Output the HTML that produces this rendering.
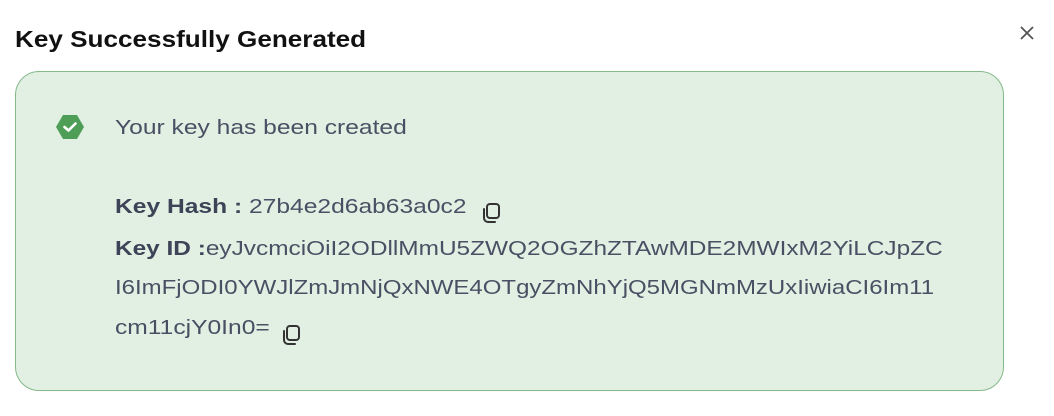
<!DOCTYPE html>
<html><head><style>
body{margin:0;width:1054px;height:416px;background:#fff;font-family:"Liberation Sans",sans-serif;position:relative;overflow:hidden}
.t{position:absolute;left:15px;top:26px;font-size:23px;font-weight:bold;color:#111;transform:scaleX(1.135);transform-origin:left top}
.x{position:absolute;left:1018px;top:24px}
.box{position:absolute;left:15px;top:71px;width:987px;height:318px;border:1px solid #86b98a;border-radius:24px;background:#e1f0e3}
.l{position:absolute;left:115px;font-size:20.5px;color:#4a5064;white-space:nowrap;transform:scaleX(1.2);transform-origin:left top}
b{color:#3e4458}
.ic{position:absolute}
</style></head><body>
<div class="t">Key Successfully Generated</div>
<svg class="x" width="18" height="18" viewBox="0 0 18 18"><path d="M3 3L15 15M15 3L3 15" stroke="#555" stroke-width="1.8"/></svg>
<div class="box"></div>
<svg class="ic" style="left:56px;top:114px" width="28" height="26" viewBox="0 0 28 26"><polygon points="7,1 21,1 28,13 21,25 7,25 0,13" fill="#4e9e57"/><path d="M8.5 13l4 3.5 7-7" stroke="#fff" stroke-width="2.6" fill="none" stroke-linecap="round" stroke-linejoin="round"/></svg>
<div class="l" style="top:116px">Your key has been created</div>
<div class="l" style="top:195px"><b>Key Hash :</b> 27b4e2d6ab63a0c2</div>
<svg class="ic" style="left:480px;top:202px" width="22" height="22" viewBox="0 0 22 22"><rect x="7" y="2" width="12" height="14" rx="3" stroke="#333" stroke-width="2" fill="none"/><path d="M4 7v9a4 4 0 0 0 4 4h7" stroke="#333" stroke-width="2" fill="none" stroke-linecap="round"/></svg>
<div class="l" style="top:237px;transform:scaleX(1.19)"><b>Key ID :</b>eyJvcmciOiI2ODllMmU5ZWQ2OGZhZTAwMDE2MWIxM2YiLCJpZC</div>
<div class="l" style="top:276px;transform:scaleX(1.17)">I6ImFjODI0YWJlZmJmNjQxNWE4OTgyZmNhYjQ5MGNmMzUxIiwiaCI6Im11</div>
<div class="l" style="top:316px">cm11cjY0In0=</div>
<svg class="ic" style="left:280px;top:324px" width="22" height="22" viewBox="0 0 22 22"><rect x="7" y="2" width="12" height="14" rx="3" stroke="#333" stroke-width="2" fill="none"/><path d="M4 7v9a4 4 0 0 0 4 4h7" stroke="#333" stroke-width="2" fill="none" stroke-linecap="round"/></svg>
</body></html>
